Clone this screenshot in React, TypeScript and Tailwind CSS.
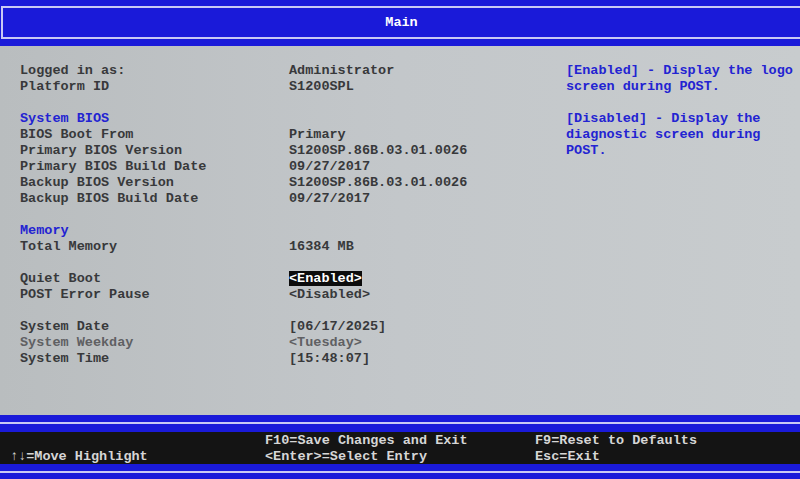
import React from "react";

type Row =
  | { kind: "blank" }
  | { kind: "head"; label: string }
  | { kind: "item"; label: string; value: string; dim?: boolean; selected?: boolean };

const rows: Row[] = [
  { kind: "item", label: "Logged in as:", value: "Administrator" },
  { kind: "item", label: "Platform ID", value: "S1200SPL" },
  { kind: "blank" },
  { kind: "head", label: "System BIOS" },
  { kind: "item", label: "BIOS Boot From", value: "Primary" },
  { kind: "item", label: "Primary BIOS Version", value: "S1200SP.86B.03.01.0026" },
  { kind: "item", label: "Primary BIOS Build Date", value: "09/27/2017" },
  { kind: "item", label: "Backup BIOS Version", value: "S1200SP.86B.03.01.0026" },
  { kind: "item", label: "Backup BIOS Build Date", value: "09/27/2017" },
  { kind: "blank" },
  { kind: "head", label: "Memory" },
  { kind: "item", label: "Total Memory", value: "16384 MB" },
  { kind: "blank" },
  { kind: "item", label: "Quiet Boot", value: "<Enabled>", selected: true },
  { kind: "item", label: "POST Error Pause", value: "<Disabled>" },
  { kind: "blank" },
  { kind: "item", label: "System Date", value: "[06/17/2025]" },
  { kind: "item", label: "System Weekday", value: "<Tuesday>", dim: true },
  { kind: "item", label: "System Time", value: "[15:48:07]" },
];

const help = [
  "[Enabled] - Display the logo",
  "screen during POST.",
  "",
  "[Disabled] - Display the",
  "diagnostic screen during",
  "POST.",
];

export default function App() {
  return (
    <div
      className="w-[800px] h-[479px] overflow-hidden flex flex-col bg-[#c3c7ca] text-[13.5px] leading-[16px] font-bold whitespace-pre"
      style={{ fontFamily: '"Liberation Mono", "DejaVu Sans Mono", monospace' }}
    >
      {/* Title bar */}
      <header className="h-[46px] shrink-0 bg-[#1a1ad9] pt-[6px]">
        <div className="h-[33px] border-y-2 border-l-2 border-[#c9c9f4] ml-[1px] flex items-center justify-center">
          <span className="text-white">Main</span>
        </div>
      </header>

      {/* Body */}
      <main className="flex-1 flex pt-[17px] bg-gradient-to-r from-[#b9bdbf] via-[#c3c7ca] to-[#c8ccce]">
        <div className="w-[566px] pl-[20px] flex flex-col">
          {rows.map((r, i) =>
            r.kind === "blank" ? (
              <div key={i} className="h-[16px]" />
            ) : r.kind === "head" ? (
              <div key={i} className="h-[16px] text-[#2323d2]">
                {r.label}
              </div>
            ) : (
              <div key={i} className="h-[16px] grid grid-cols-[269px_1fr]">
                <span className={r.dim ? "text-[#5f6063]" : "text-[#38393b]"}>{r.label}</span>
                <span>
                  <span
                    className={
                      r.selected
                        ? "bg-[#0c0c0c] text-white"
                        : r.dim
                        ? "text-[#5f6063]"
                        : "text-[#38393b]"
                    }
                  >
                    {r.value}
                  </span>
                </span>
              </div>
            )
          )}
        </div>
        <div className="flex-1 flex flex-col text-[#2323d2]">
          {help.map((l, i) => (
            <div key={i} className="h-[16px]">
              {l}
            </div>
          ))}
        </div>
      </main>

      {/* Footer */}
      <footer className="h-[64px] shrink-0 bg-[#1a1ad9] flex flex-col">
        <div className="h-[7px]" />
        <div className="h-[2px] bg-[#c9c9f4]" />
        <div className="h-[8px]" />
        <div className="h-[32px] bg-[#141414] text-[#d6d6d6] grid grid-cols-[255px_270px_1fr] pl-[10px] pt-[1px]">
          <div className="flex flex-col">
            <span className="h-[16px]" />
            <span className="h-[15px]">↑↓=Move Highlight</span>
          </div>
          <div className="flex flex-col">
            <span className="h-[16px]">F10=Save Changes and Exit</span>
            <span className="h-[15px]">{"<Enter>=Select Entry"}</span>
          </div>
          <div className="flex flex-col">
            <span className="h-[16px]">F9=Reset to Defaults</span>
            <span className="h-[15px]">Esc=Exit</span>
          </div>
        </div>
        <div className="h-[7px]" />
        <div className="h-[2px] bg-[#c9c9f4]" />
      </footer>
    </div>
  );
}
